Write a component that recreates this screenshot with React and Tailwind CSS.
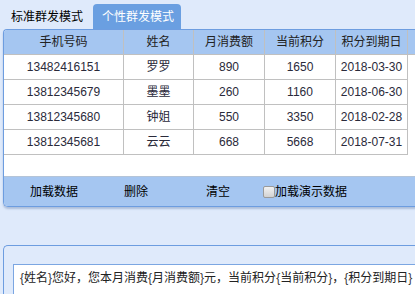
const cols = [
  { key: 'phone', label: '手机号码', w: 'w-[120px]' },
  { key: 'name', label: '姓名', w: 'w-[70px]' },
  { key: 'spend', label: '月消费额', w: 'w-[71px]' },
  { key: 'points', label: '当前积分', w: 'w-[71px]' },
  { key: 'expire', label: '积分到期日', w: 'w-[72px]' },
]

const rows = [
  { phone: '13482416151', name: '罗罗', spend: '890', points: '1650', expire: '2018-03-30' },
  { phone: '13812345679', name: '墨墨', spend: '260', points: '1160', expire: '2018-06-30' },
  { phone: '13812345680', name: '钟姐', spend: '550', points: '3350', expire: '2018-02-28' },
  { phone: '13812345681', name: '云云', spend: '668', points: '5668', expire: '2018-07-31' },
]

const cjk = "font-['Liberation_Sans','Noto_Sans_CJK_SC',sans-serif]"

function Brace({ children }) {
  return <span className="text-[#3a3a3a]">{children}</span>
}

export default function App() {
  return (
    <div className={`w-[415px] h-[294px] overflow-hidden bg-[#dfeafb] text-[12px] text-[#222] ${cjk}`}>
      {/* tabs */}
      <div className="flex pt-[4px] pl-[5px] gap-[4px] h-[29px]">
        <div className="h-[25px] px-[6px] flex items-center text-black">标准群发模式</div>
        <div className="h-[25px] pl-[9px] pr-[7px] flex items-center bg-[#6a9fe1] text-white rounded-t-[4px]">
          个性群发模式
        </div>
      </div>

      {/* table panel */}
      <div className="ml-[3px] w-[420px] border-l border-t border-b border-[#6d9de0] rounded-tl-[4px] rounded-bl-[5px] shadow-[0_2px_2px_rgba(80,110,160,0.35)] overflow-hidden">
        <div className="flex h-[25px] bg-[#a5c6f1] border-b border-[#c0c0c0]">
          {cols.map((c) => (
            <div key={c.key} className={`${c.w} shrink-0 border-r border-[#c0c0c0] flex items-center justify-center text-[#222]`}>
              {c.label}
            </div>
          ))}
        </div>
        <div className="bg-white">
          {rows.map((r) => (
            <div key={r.phone} className="flex h-[25px]">
              {cols.map((c) => (
                <div key={c.key} className={`${c.w} shrink-0 border-r border-b border-[#c0c0c0] flex items-center justify-center text-[#2a2a3a]`}>
                  {r[c.key]}
                </div>
              ))}
            </div>
          ))}
          <div className="h-[21px]" />
        </div>
        <div className="h-[30px] bg-[#a5c6f1] border-t border-[#b4c4d8] flex items-center pl-[9px] text-black">
          <div className="w-[82px] text-center">加载数据</div>
          <div className="w-[82px] text-center">删除</div>
          <div className="w-[82px] text-center">清空</div>
          <div className="ml-[4px] flex items-center">
            <span className="w-[12px] h-[12px] rounded-[2px] border border-[#9a9a9a] bg-gradient-to-b from-[#f2f2f2] to-[#d2d2d2]" />
            <span>加载演示数据</span>
          </div>
        </div>
      </div>

      {/* message panel */}
      <div className="mt-[38px] ml-[3px] w-[420px] h-[60px] border-l border-t border-[#6d9de0] rounded-tl-[5px] pl-[9px] pt-[18px]">
        <div className="h-[40px] bg-white border-l border-t border-[#7ba6e2] pl-[6px] pt-[4px] whitespace-nowrap text-[#222]">
          <Brace>{'{'}</Brace>姓名<Brace>{'}'}</Brace>您好，您本月消费<Brace>{'{'}</Brace>月消费额<Brace>{'}'}</Brace>元，当前积分<Brace>{'{'}</Brace>当前积分<Brace>{'}'}</Brace>，<Brace>{'{'}</Brace>积分到期日<Brace>{'}'}</Brace>
        </div>
      </div>
    </div>
  )
}
